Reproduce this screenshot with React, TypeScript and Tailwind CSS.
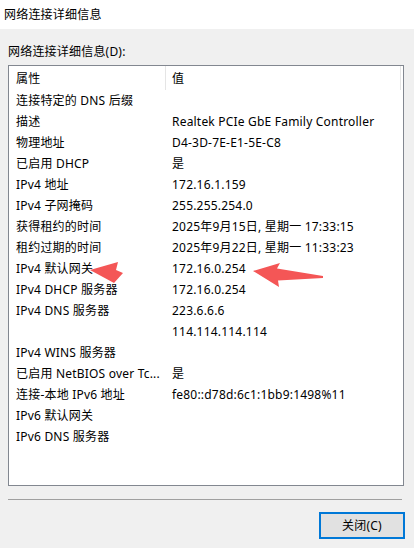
const rows: [string, string][] = [
  ['连接特定的 DNS 后缀', ''],
  ['描述', 'Realtek PCIe GbE Family Controller'],
  ['物理地址', 'D4-3D-7E-E1-5E-C8'],
  ['已启用 DHCP', '是'],
  ['IPv4 地址', '172.16.1.159'],
  ['IPv4 子网掩码', '255.255.254.0'],
  ['获得租约的时间', '2025年9月15日, 星期一 17:33:15'],
  ['租约过期的时间', '2025年9月22日, 星期一 11:33:23'],
  ['IPv4 默认网关', '172.16.0.254'],
  ['IPv4 DHCP 服务器', '172.16.0.254'],
  ['IPv4 DNS 服务器', '223.6.6.6'],
  ['', '114.114.114.114'],
  ['IPv4 WINS 服务器', ''],
  ['已启用 NetBIOS over Tc...', '是'],
  ['连接-本地 IPv6 地址', 'fe80::d78d:6c1:1bb9:1498%11'],
  ['IPv6 默认网关', ''],
  ['IPv6 DNS 服务器', ''],
];

export default function App() {
  return (
    <div
      className="relative w-[414px] h-[548px] bg-[#f0f0f0] text-[12px] tracking-[0.2px] text-black overflow-hidden"
      style={{ fontFamily: '"Noto Sans", "Noto Sans CJK SC", sans-serif' }}
    >
      {/* title bar */}
      <div className="h-[29px] bg-white flex items-center pl-[4px] pt-[1px]">网络连接详细信息</div>

      <div className="mt-[15px] ml-[8px] leading-[16px]">网络连接详细信息(D):</div>

      {/* list view */}
      <div className="mt-[5px] ml-[8px] w-[396px] h-[421px] border border-[#828790] bg-white">
        <div className="flex h-[24px] items-center">
          <div className="w-[157px] h-full pl-[7px] pt-[2px] flex items-center border-r border-[#e5e5e5]">属性</div>
          <div className="flex-1 h-full pl-[6px] pt-[2px] flex items-center border-r border-[#e5e5e5] mr-[2px]">值</div>
        </div>
        {rows.map(([k, v], i) => (
          <div key={i} className="flex h-[21px] pt-[1px] items-center whitespace-nowrap">
            <div className="w-[157px] pl-[7px] overflow-hidden">{k}</div>
            <div className="flex-1 pl-[6px]">{v}</div>
          </div>
        ))}
      </div>

      <div className="mt-[13px] ml-[8px] w-[394px] h-px bg-[#a0a0a0]" />

      <div className="flex mt-[12px]">
        <button className="ml-auto mr-[9px] w-[86px] h-[27px] border-2 border-[#0078d7] bg-[#e1e1e1] flex items-center justify-center">
          关闭(C)
        </button>
      </div>

      {/* red annotation arrows */}
      <svg className="absolute inset-0 pointer-events-none" width="414" height="548" viewBox="0 0 414 548">
        <path d="M90 270 L118 262 L116 270 L123 273 L114 283 Z" fill="#f45656" />
        <path d="M253 271 L280 263 L277 268.5 L323 276 L323 278 L278 280.5 L279 287 Z" fill="#f45656" />
      </svg>
    </div>
  );
}
